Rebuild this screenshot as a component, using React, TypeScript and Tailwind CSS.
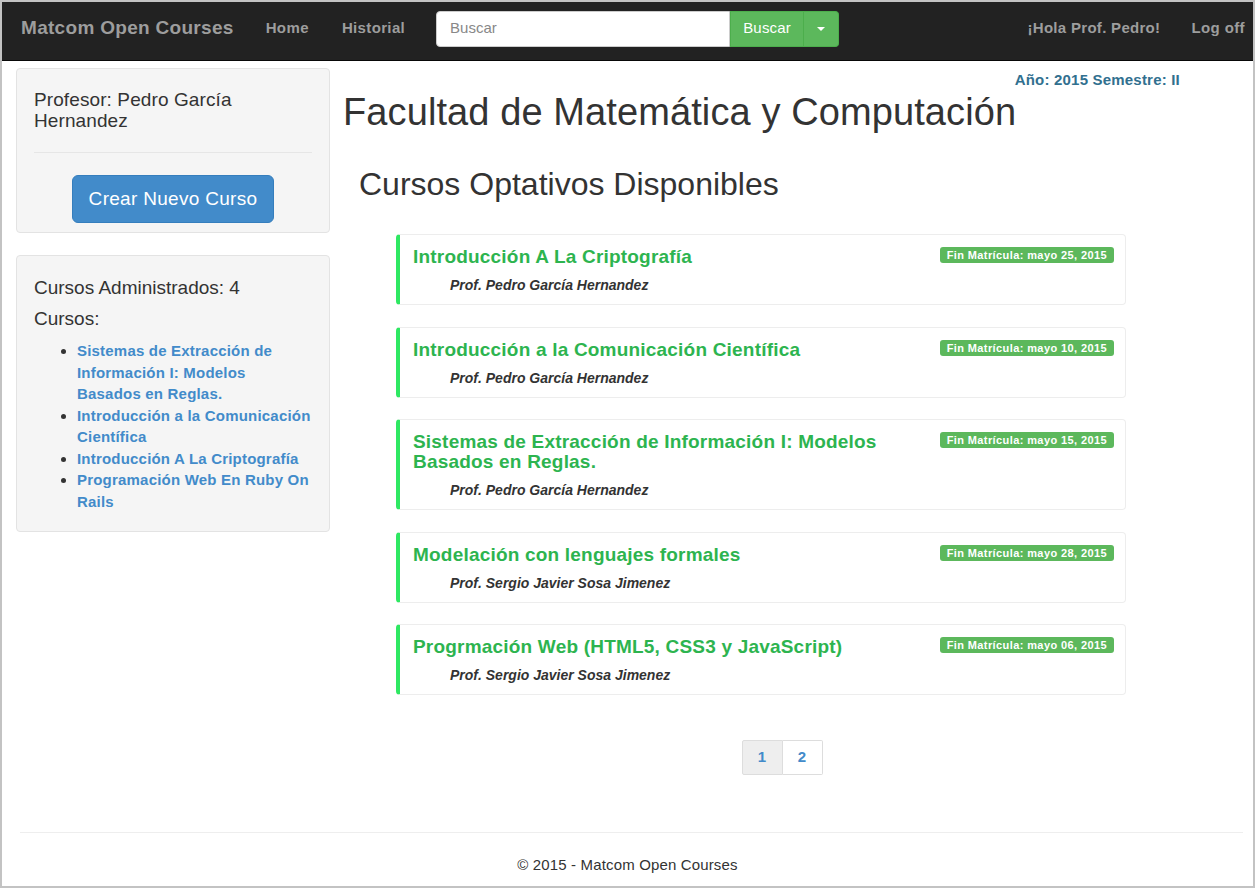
import React from "react";

const courses = [
  { title: "Introducción A La Criptografía", prof: "Prof. Pedro García Hernandez", date: "mayo 25, 2015" },
  { title: "Introducción a la Comunicación Científica", prof: "Prof. Pedro García Hernandez", date: "mayo 10, 2015" },
  { title: "Sistemas de Extracción de Información I: Modelos Basados en Reglas.", prof: "Prof. Pedro García Hernandez", date: "mayo 15, 2015" },
  { title: "Modelación con lenguajes formales", prof: "Prof. Sergio Javier Sosa Jimenez", date: "mayo 28, 2015" },
  { title: "Progrmación Web (HTML5, CSS3 y JavaScript)", prof: "Prof. Sergio Javier Sosa Jimenez", date: "mayo 06, 2015" },
];

const links = [
  "Sistemas de Extracción de Información I: Modelos Basados\u00a0en Reglas.",
  "Introducción a la Comunicación Científica",
  "Introducción A La Criptografía",
  "Programación Web En Ruby On Rails",
];

export default function App() {
  return (
    <div
      className="w-[1255px] h-[888px] border-2 border-[#c3c3c3] bg-white text-[#333] flex flex-col overflow-hidden"
      style={{ fontFamily: '"Liberation Sans", Arial, sans-serif' }}
    >
      {/* Navbar */}
      <div className="h-[59px] shrink-0 bg-[#222] border-b border-[#080808] flex items-center pb-[5px] pl-[19px] pr-[8px] text-[#9d9d9d]">
        <div className="text-[19px] font-bold tracking-[0.3px]">Matcom Open Courses</div>
        <div className="ml-[32px] text-[15px] font-bold tracking-[0.4px]">Home</div>
        <div className="ml-[33px] text-[15px] font-bold tracking-[0.35px]">Historial</div>
        <div className="ml-[31px] flex h-[36px]">
          <div className="w-[294px] h-full bg-white rounded-l-[4px] border border-[#ccc] flex items-center pl-[13px] text-[15px] text-[#888]">
            Buscar
          </div>
          <div className="w-[74px] h-full bg-[#5cb85c] border border-[#4cae4c] flex items-center justify-center text-white text-[15px] tracking-[0.2px]">
            Buscar
          </div>
          <div className="w-[35px] h-full bg-[#5cb85c] border border-l-0 border-[#4cae4c] rounded-r-[4px] flex items-center justify-center">
            <div className="w-0 h-0 border-l-[4px] border-r-[4px] border-t-[4px] border-l-transparent border-r-transparent border-t-white" />
          </div>
        </div>
        <div className="flex-1" />
        <div className="text-[15px] font-bold tracking-[0.3px]">¡Hola Prof. Pedro!</div>
        <div className="ml-[31px] text-[15px] font-bold tracking-[0.4px]">Log off</div>
      </div>

      {/* Body */}
      <div className="flex pl-[14px]">
        {/* Sidebar */}
        <div className="w-[314px] shrink-0 pt-[7px] flex flex-col gap-[22px]">
          <div className="h-[165px] bg-[#f5f5f5] border border-[#e3e3e3] rounded-[4px] px-[17px] pt-[20px]">
            <div className="text-[19px] leading-[21px] tracking-[0.1px]">Profesor: Pedro García Hernandez</div>
            <div className="mt-[21px] border-t border-[#e6e6e6]" />
            <div className="mt-[22px] flex justify-center">
              <div className="w-[202px] h-[48px] bg-[#428bca] border border-[#357ebd] rounded-[6px] text-white text-[19px] tracking-[0.3px] flex items-center justify-center">
                Crear Nuevo Curso
              </div>
            </div>
          </div>
          <div className="h-[277px] bg-[#f5f5f5] border border-[#e3e3e3] rounded-[4px] px-[17px] pt-[21px]">
            <div className="text-[19px] leading-[21px]">Cursos Administrados: 4</div>
            <div className="mt-[10px] text-[19px] leading-[21px]">Cursos:</div>
            <ul className="mt-[11px] -mr-[2px] pl-[43px] list-disc text-[15px] font-bold leading-[21.5px] tracking-[0.2px] text-[#428bca] marker:text-[#333]">
              {links.map((l) => (
                <li key={l}>{l}</li>
              ))}
            </ul>
          </div>
        </div>

        {/* Main */}
        <div className="w-[878px] ml-[13px] flex flex-col">
          <div className="mt-[11px] pr-[41px] text-right text-[15px] font-bold leading-[16px] tracking-[0.2px] text-[#31708f]">
            Año: 2015 Semestre: II
          </div>
          <h1 className="mt-[3px] text-[38px] leading-[42px] tracking-[0.1px] text-[#333]">Facultad de Matemática y Computación</h1>
          <h2 className="mt-[33px] ml-[16px] text-[32px] leading-[36px] text-[#333]">Cursos Optativos Disponibles</h2>
          <div className="mt-[32px] ml-[53px] w-[730px] flex flex-col gap-[21.5px]">
            {courses.map((c) => (
              <div
                key={c.title}
                className="border border-[#ededed] border-l-[4px] border-l-[#2ee862] rounded-[4px] pl-[13px] pr-[11px] pt-[12px] pb-[9px] flex items-start"
              >
                <div className="flex-1">
                  <div className="text-[19px] font-bold leading-[20px] tracking-[0.2px] text-[#2db44f] pr-[10px]">{c.title}</div>
                  <div className="mt-[8px] ml-[37px] text-[14px] font-bold italic leading-[20px] text-[#333]">{c.prof}</div>
                </div>
                <div className="shrink-0 bg-[#5cb85c] text-white text-[11px] font-bold leading-[16px] tracking-[0.4px] px-[7px] rounded-[3px]">
                  Fin Matrícula: {c.date}
                </div>
              </div>
            ))}
          </div>
          <div className="mt-[45px] flex justify-center">
            <div className="flex text-[15px] font-bold text-[#428bca]">
              <div className="w-[41px] h-[35px] bg-[#eee] border border-[#ddd] rounded-l-[2px] flex items-center justify-center">1</div>
              <div className="w-[40px] h-[35px] bg-white border border-l-0 border-[#ddd] rounded-r-[2px] flex items-center justify-center">2</div>
            </div>
          </div>
        </div>
      </div>

      <div className="flex-1" />
      {/* Footer */}
      <div className="ml-[18px] mr-[10px] border-t border-[#eee]" />
      <div className="h-[53px] flex items-center justify-center text-[15px] tracking-[0.15px] text-[#333] pt-[11px]">© 2015 - Matcom Open Courses</div>
    </div>
  );
}
